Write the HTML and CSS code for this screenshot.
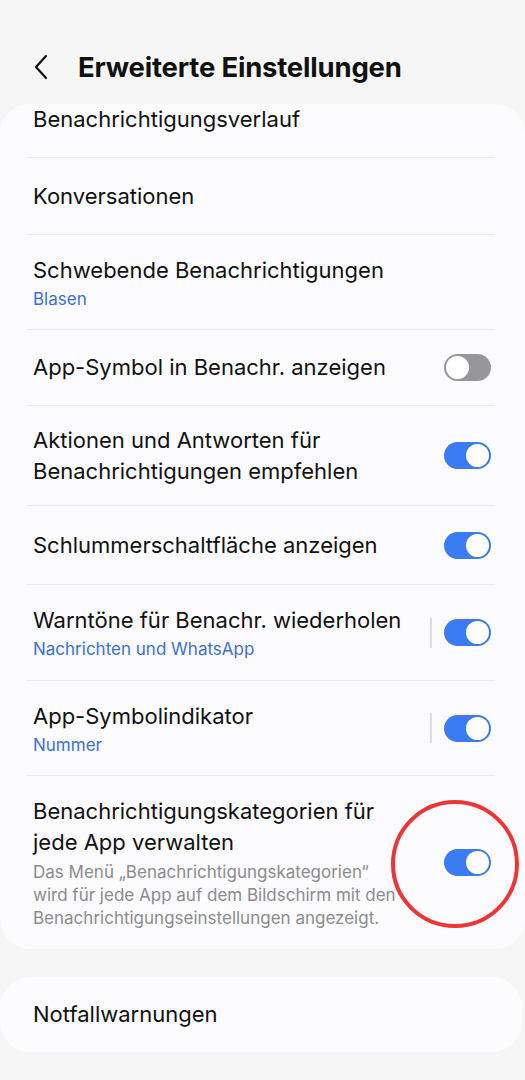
FILE: index.html
```html
<!DOCTYPE html>
<html lang="de">
<head>
  <meta charset="UTF-8">
  <meta name="viewport" content="width=device-width, initial-scale=1.0">
  <title>Erweiterte Einstellungen</title>
  <link rel="stylesheet" href="styles.css">
</head>
<body>
  <header class="topbar">
    <svg class="back" width="16" height="26" viewBox="0 0 16 26">
      <path d="M13 2 L3 13 L13 24" fill="none" stroke="#111" stroke-width="2.2" stroke-linecap="round" stroke-linejoin="round"/>
    </svg>
    <h1>Erweiterte Einstellungen</h1>
  </header>

  <div class="card">
    <div class="row first">
      <div class="text"><div class="title">Benachrichtigungsverlauf</div></div>
    </div>
    <div class="row h77">
      <div class="text"><div class="title">Konversationen</div></div>
    </div>
    <div class="row h95">
      <div class="text">
        <div class="title">Schwebende Benachrichtigungen</div>
        <div class="sub">Blasen</div>
      </div>
    </div>
    <div class="row h76">
      <div class="text"><div class="title">App-Symbol in Benachr. anzeigen</div></div>
      <span class="switch off"></span>
    </div>
    <div class="row h100">
      <div class="text"><div class="title">Aktionen und Antworten für Benachrichtigungen empfehlen</div></div>
      <span class="switch"></span>
    </div>
    <div class="row h79">
      <div class="text"><div class="title">Schlummerschaltfläche anzeigen</div></div>
      <span class="switch"></span>
    </div>
    <div class="row h96">
      <div class="text">
        <div class="title">Warntöne für Benachr. wiederholen</div>
        <div class="sub">Nachrichten und WhatsApp</div>
      </div>
      <span class="divider"></span>
      <span class="switch"></span>
    </div>
    <div class="row h95">
      <div class="text">
        <div class="title">App-Symbolindikator</div>
        <div class="sub">Nummer</div>
      </div>
      <span class="divider"></span>
      <span class="switch"></span>
    </div>
    <div class="row last">
      <div class="text">
        <div class="title">Benachrichtigungskategorien für jede App verwalten</div>
        <div class="desc">Das Menü „Benachrichtigungskategorien“ wird für jede App auf dem Bildschirm mit den Benachrichtigungseinstellungen angezeigt.</div>
      </div>
      <span class="switch"></span>
      <span class="ring"></span>
    </div>
  </div>

  <div class="card single">
    <div class="row h76">
      <div class="text"><div class="title">Notfallwarnungen</div></div>
    </div>
  </div>
</body>
</html>
```

FILE: styles.css
```css
body {
  margin: 0;
  background: #f6f6f7;
  font-family: Inter, "Noto Sans", sans-serif;
  color: #111;
  width: 525px;
  height: 1080px;
  overflow: hidden;
}
.topbar {
  display: flex;
  align-items: center;
  height: 66px;
  padding: 34px 0 0 33px;
}
.back {
  margin-right: 29px;
}
.topbar h1 {
  margin: 0;
  font-size: 27.5px;
  font-weight: 700;
  letter-spacing: -0.2px;
}
.card {
  background: #fcfcfe;
  border-radius: 30px;
  margin: 10px 0 0 0;
  padding: 0 30px 0 27px;
}
.card.single {
  margin-top: 28px;
  width: 465px;
}
.row {
  display: flex;
  align-items: center;
  padding: 0 4px 0 6px;
  border-top: 1.5px solid #e9e9ec;
  position: relative;
}
.row.first {
  border-top: none;
  height: 47px;
  align-items: flex-start;
  margin-top: -6px;
  padding-bottom: 6px;
}
.card.single .row { border-top: none; }
.h76 { height: 75px; }
.h77 { height: 76px; }
.h79 { height: 78px; }
.h95 { height: 94px; }
.h96 { height: 95px; }
.h100 { height: 99px; }
.row.last {
  padding-top: 20px;
  padding-bottom: 19px;
}
.text {
  flex: 1;
  min-width: 0;
}
.title {
  font-size: 22px;
  line-height: 31px;
  padding-right: 6px;
}
.row.h100 .title { padding-right: 30px; }
.row.last .title {
  padding-right: 0;
  max-width: 360px;
}
.sub {
  font-size: 17px;
  line-height: 22px;
  color: #3c6fd6;
  margin-top: 2px;
}
.desc {
  font-size: 17px;
  line-height: 23px;
  color: #8b8b8e;
  margin-top: 3px;
  max-width: 370px;
}
.divider {
  width: 2px;
  height: 30px;
  background: #dedee1;
  margin-right: 12px;
}
.switch {
  flex: none;
  position: relative;
  width: 47px;
  height: 27px;
  border-radius: 14px;
  background: #3b7cf4;
  box-sizing: border-box;
}
.switch::after {
  content: "";
  position: absolute;
  right: 2px;
  top: 2px;
  width: 23px;
  height: 23px;
  border-radius: 50%;
  background: #fff;
  box-sizing: border-box;
}
.switch.off {
  background: #97979b;
}
.switch.off::after {
  right: auto;
  left: 2px;
}
.row.last .switch {
  position: absolute;
  right: 4px;
  top: 73px;
}
.ring {
  position: absolute;
  left: 364px;
  top: 24px;
  width: 120px;
  height: 120px;
  border: 4px solid #ee3436;
  border-radius: 50%;
}
```
